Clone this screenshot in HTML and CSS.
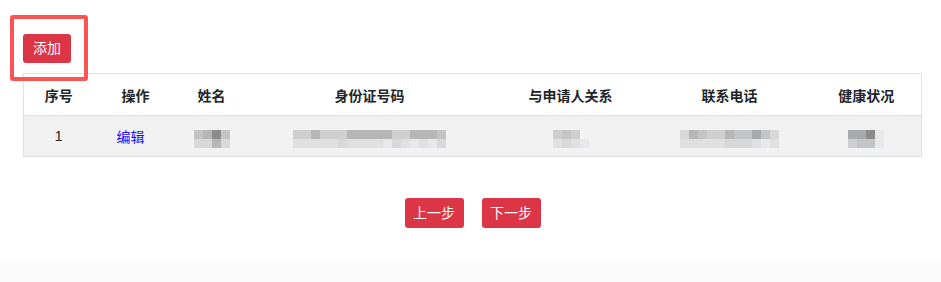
FILE: index.html
```html
<!DOCTYPE html>
<html lang="zh-CN">
<head>
    <meta charset="UTF-8">
    <title>家庭成员</title>
    <link rel="stylesheet" href="styles.css">
</head>
<body>
    <div class="page">
        <!-- highlight around the add button -->
        <div class="mark"></div>

        <div class="toolbar">
            <button class="btn">添加</button>
        </div>

        <table class="members">
            <colgroup>
                <col style="width: 70px">
                <col style="width: 84px">
                <col style="width: 68px">
                <col style="width: 248px">
                <col style="width: 154px">
                <col style="width: 164px">
                <col>
            </colgroup>
            <thead>
                <tr>
                    <th>序号</th>
                    <th>操作</th>
                    <th>姓名</th>
                    <th>身份证号码</th>
                    <th>与申请人关系</th>
                    <th>联系电话</th>
                    <th>健康状况</th>
                </tr>
            </thead>
            <tbody>
                <tr>
                    <td>1</td>
                    <td class="actions"><a href="#" class="edit">编辑</a></td>
                    <td>
                        <div class="mosaic">
                            <div><span class="s4"></span><span class="s3"></span><span class="s1"></span><span class="s4"></span></div>
                            <div><span class="s6"></span><span class="s6"></span><span class="s3"></span><span class="s6"></span></div>
                        </div>
                    </td>
                    <td>
                        <div class="mosaic">
                            <div><span class="s5"></span><span class="s5"></span><span class="s3"></span><span class="s5"></span><span class="s5"></span><span class="s5"></span><span class="s3"></span><span class="s3"></span><span class="s3"></span><span class="s3"></span><span class="s3"></span><span class="s5"></span><span class="s5"></span><span class="s3"></span><span class="s3"></span><span class="s3"></span><span class="s4"></span></div>
                            <div><span class="s7"></span><span class="s7"></span><span class="s7"></span><span class="s7"></span><span class="s7"></span><span class="s6"></span><span class="s7"></span><span class="s7"></span><span class="s7"></span><span class="s7"></span><span class="s8"></span><span class="s6"></span><span class="s7"></span><span class="s8"></span><span class="s7"></span><span class="s8"></span><span class="s6"></span></div>
                        </div>
                    </td>
                    <td>
                        <div class="mosaic">
                            <div><span class="s5"></span><span class="s4"></span><span class="s5"></span><span></span></div>
                            <div><span class="s7"></span><span class="s6"></span><span class="s7"></span><span class="s8"></span></div>
                        </div>
                    </td>
                    <td>
                        <div class="mosaic">
                            <div><span class="s6"></span><span class="s3"></span><span class="s4"></span><span class="s5"></span><span class="s5"></span><span class="s3"></span><span class="s4"></span><span class="s4"></span><span class="s2"></span><span class="s4"></span><span class="s6"></span></div>
                            <div><span class="s7"></span><span class="s7"></span><span class="s7"></span><span class="s7"></span><span class="s7"></span><span class="s6"></span><span class="s6"></span><span class="s6"></span><span class="s7"></span><span class="s8"></span><span class="s7"></span></div>
                        </div>
                    </td>
                    <td>
                        <div class="mosaic">
                            <div><span class="s2"></span><span class="s2"></span><span class="s1"></span><span class="s8"></span></div>
                            <div><span class="s5"></span><span class="s4"></span><span class="s4"></span><span class="s8"></span></div>
                        </div>
                    </td>
                </tr>
            </tbody>
        </table>

        <div class="steps">
            <button class="btn btn-step">上一步</button>
            <button class="btn btn-step">下一步</button>
        </div>
    </div>
    <div class="footer"></div>
</body>
</html>
```

FILE: styles.css
```css
body {
    margin: 0;
    font-family: "Liberation Sans", "Noto Sans CJK SC", sans-serif;
    font-size: 14px;
    color: #212529;
    background-color: #fff;
}

.page {
    position: relative;
    width: 899px;
    padding: 34px 0 35px 23px;
}

.mark {
    position: absolute;
    left: 10px;
    top: 15px;
    width: 70px;
    height: 58px;
    border: 4px solid #fb5454;
    border-radius: 3px;
}

.toolbar {
    height: 29px;
    margin-bottom: 10px;
}

.btn {
    font-family: inherit;
    font-size: 14px;
    color: #fff;
    background-color: #dc3545;
    border: none;
    border-radius: 3px;
    height: 29px;
    padding: 0 10px;
    line-height: 29px;
    cursor: pointer;
}

.members {
    width: 899px;
    border-collapse: collapse;
    table-layout: fixed;
    border: 1px solid #dee2e6;
}

.members th {
    height: 41px;
    padding: 0;
    font-weight: bold;
    text-align: center;
    border-bottom: 1px solid #dee2e6;
}

.members td {
    height: 40px;
    padding: 0;
    text-align: center;
    background-color: #f2f2f2;
}

.members td.actions {
    padding-right: 10px;
}

.edit {
    color: #1a0dff;
    text-decoration: none;
}

.mosaic {
    display: inline-flex;
    flex-direction: column;
    vertical-align: middle;
    margin-top: 5px;
}

.mosaic div {
    display: flex;
}

.mosaic span {
    width: 9px;
    height: 9px;
}

.s1 { background-color: #8b8b8a; }
.s2 { background-color: #a8a9ab; }
.s3 { background-color: #b6b6b7; }
.s4 { background-color: #c3c4c5; }
.s5 { background-color: #cfcfcf; }
.s6 { background-color: #d8d8d8; }
.s7 { background-color: #e0e0e0; }
.s8 { background-color: #e8e8ea; }

.steps {
    display: flex;
    justify-content: center;
    gap: 18px;
    margin-top: 41px;
}

.btn-step {
    width: 59px;
    height: 30px;
    padding: 0;
    line-height: 30px;
}

.footer {
    height: 19px;
    background-color: #fafafa;
}
```
